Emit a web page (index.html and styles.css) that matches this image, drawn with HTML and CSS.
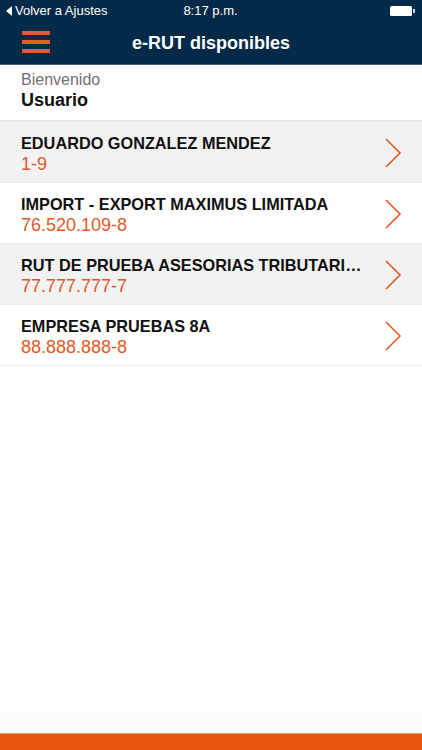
FILE: index.html
```html
<!DOCTYPE html>
<html lang="es">
<head>
<meta charset="utf-8">
<title>e-RUT disponibles</title>
<link rel="stylesheet" href="styles.css">
</head>
<body>
<div class="app">
  <header class="top">
    <div class="status">
      <div class="status-left"><span class="back-tri"></span>Volver a Ajustes</div>
      <div class="status-time">8:17 p.m.</div>
      <div class="status-right"><span class="battery"></span><span class="battery-tip"></span></div>
    </div>
    <div class="navbar">
      <div class="menu"><span></span><span></span><span></span></div>
      <div class="title">e-RUT disponibles</div>
      <div class="menu-spacer"></div>
    </div>
  </header>
  <section class="welcome">
    <div class="welcome-label">Bienvenido</div>
    <div class="welcome-user">Usuario</div>
  </section>
  <ul class="list">
    <li class="row alt">
      <div class="row-text"><div class="row-name">EDUARDO GONZALEZ MENDEZ</div><div class="row-rut">1-9</div></div>
      <svg class="chev" width="18" height="30" viewBox="0 0 18 30"><polyline points="2,1 16,15 2,29" fill="none" stroke="#e05a28" stroke-width="1.6"/></svg>
    </li>
    <li class="row">
      <div class="row-text"><div class="row-name">IMPORT - EXPORT MAXIMUS LIMITADA</div><div class="row-rut">76.520.109-8</div></div>
      <svg class="chev" width="18" height="30" viewBox="0 0 18 30"><polyline points="2,1 16,15 2,29" fill="none" stroke="#e05a28" stroke-width="1.6"/></svg>
    </li>
    <li class="row alt">
      <div class="row-text"><div class="row-name">RUT DE PRUEBA ASESORIAS TRIBUTARIAS LIMITADA</div><div class="row-rut">77.777.777-7</div></div>
      <svg class="chev" width="18" height="30" viewBox="0 0 18 30"><polyline points="2,1 16,15 2,29" fill="none" stroke="#e05a28" stroke-width="1.6"/></svg>
    </li>
    <li class="row">
      <div class="row-text"><div class="row-name">EMPRESA PRUEBAS 8A</div><div class="row-rut">88.888.888-8</div></div>
      <svg class="chev" width="18" height="30" viewBox="0 0 18 30"><polyline points="2,1 16,15 2,29" fill="none" stroke="#e05a28" stroke-width="1.6"/></svg>
    </li>
  </ul>
  <div class="spacer"></div>
  <footer class="bottom"></footer>
</div>
</body>
</html>
```
FILE: styles.css
```css
* { box-sizing: border-box; }
html, body { margin: 0; padding: 0; }
body {
  font-family: "Liberation Sans", Arial, sans-serif;
  background: #ffffff;
  color: #111;
}
.app {
  width: 422px;
  height: 750px;
  display: flex;
  flex-direction: column;
  overflow: hidden;
}
.top {
  background: #032b49;
  color: #fff;
  border-bottom: 1px solid #4a6478;
}
.status {
  height: 21px;
  display: flex;
  align-items: center;
  justify-content: space-between;
  padding: 0 7px 0 6px;
  font-size: 13px;
}
.status-left { display: flex; align-items: center; gap: 3px; width: 120px; }
.back-tri {
  width: 0; height: 0;
  border-top: 5px solid transparent;
  border-bottom: 5px solid transparent;
  border-right: 6px solid #fff;
}
.status-time { font-size: 13px; }
.status-right { width: 120px; display: flex; justify-content: flex-end; align-items: center; }
.battery {
  width: 22px; height: 10px;
  background: #fff;
  border-radius: 1.5px;
}
.battery-tip { width: 2px; height: 4px; background: #fff; margin-left: 1px; opacity: 0.8; }
.navbar {
  height: 43px;
  display: flex;
  align-items: center;
  padding: 0 22px;
  justify-content: space-between;
}
.menu {
  width: 28px;
  display: flex;
  flex-direction: column;
  gap: 5px;
  margin-top: -1px;
}
.menu span { display: block; height: 4px; background: #e35b2a; }
.menu-spacer { width: 28px; }
.title {
  font-weight: bold;
  font-size: 18px;
  margin-top: 1px;
}
.welcome {
  padding: 6px 21px 0;
  height: 57px;
  border-bottom: 2px solid #e6e6e6;
}
.welcome-label { color: #727272; font-size: 16px; line-height: 18px; }
.welcome-user { font-weight: bold; font-size: 18px; line-height: 22px; }
.list { list-style: none; margin: 0; padding: 0; }
.row {
  height: 61px;
  display: flex;
  align-items: center;
  padding: 0 20px 0 21px;
  border-bottom: 1px solid #ececec;
  background: #ffffff;
}
.row.alt { background: #f2f2f2; }
.row-text { flex: 1; min-width: 0; padding-right: 20px; margin-top: 3px; }
.row-name {
  font-weight: bold;
  font-size: 16.3px;
  line-height: 20px;
  white-space: nowrap;
  overflow: hidden;
  text-overflow: ellipsis;
}
.row-rut { color: #e05a28; font-size: 18px; line-height: 22px; }
.chev { flex: none; margin-top: 1px; }
.spacer { flex: 1; background: linear-gradient(#fff 90%, #fafafa); }
.bottom {
  height: 17px;
  background: #e8530f;
  border-top: 1px solid #f09a72;
}
```
